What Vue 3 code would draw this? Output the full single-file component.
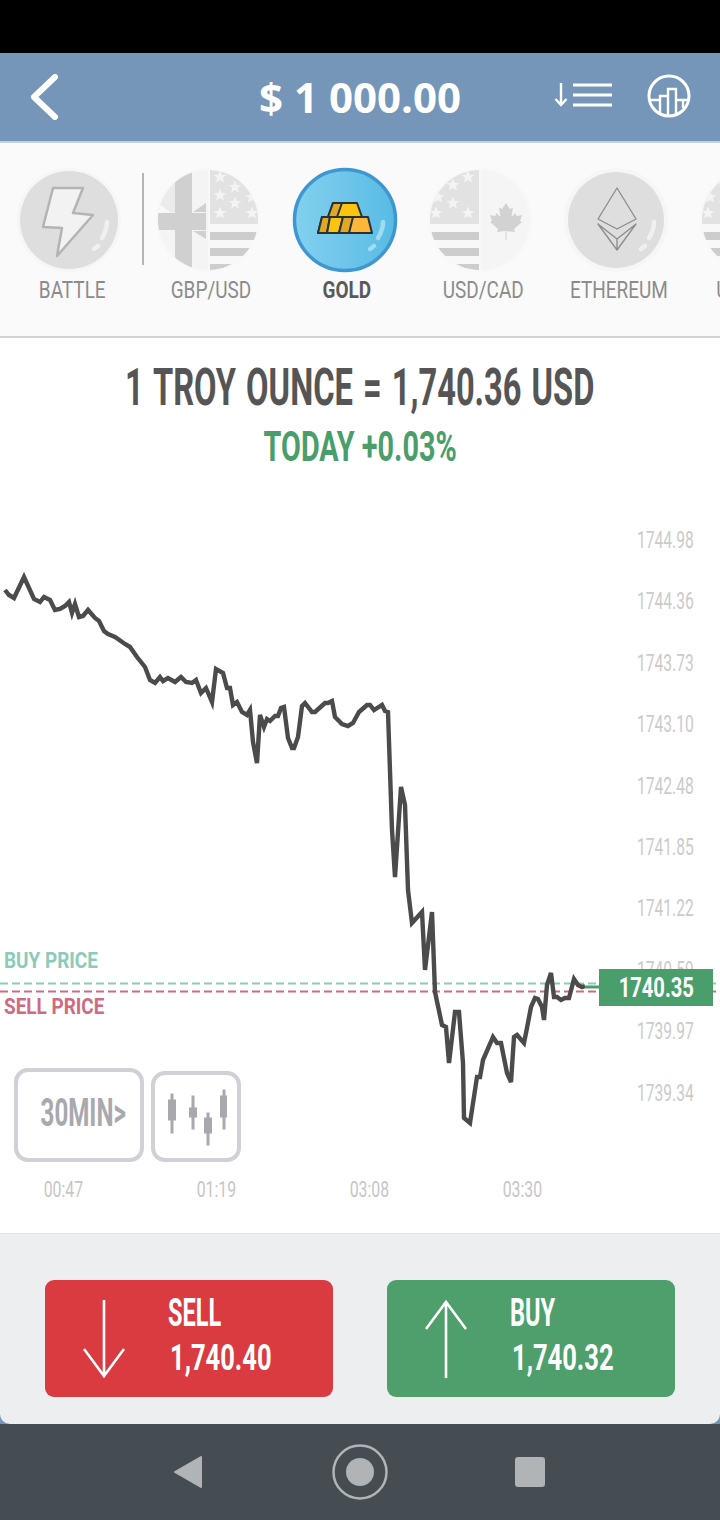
<template>
  <div class="screen">
    <div class="status"></div>

    <header class="head">
      <div class="head-left">
        <svg width="30" height="46" viewBox="0 0 30 46"><path d="M26 3 5 23l21 20" fill="none" stroke="#fff" stroke-width="6" stroke-linecap="round" stroke-linejoin="round"/></svg>
      </div>
      <div class="balance">$ 1 000.00</div>
      <div class="head-right">
        <svg class="sort" width="58" height="26" viewBox="0 0 58 26" fill="none" stroke="#fff">
          <path d="M7 1v22M1.5 17 7 23l5.500-6" stroke-width="2.400"/>
          <path d="M19 3h39M19 13h39M19 23h39" stroke-width="3"/>
        </svg>
        <svg class="stats" width="44" height="44" viewBox="0 0 44 44" fill="none" stroke="#fff" stroke-width="3">
          <circle cx="22" cy="22" r="20"/>
          <path d="M3 26h10v-4h8v-7h8v11h12M13 26v14M21 22v20M29 15v26M36 26v8" stroke-width="2.400"/>
        </svg>
      </div>
    </header>

    <nav class="tabs">
      <template v-for="t in tabs" :key="t.name">
        <div class="tab" :class="{ active: t.active }">
          <svg class="coin" width="112" height="112" viewBox="0 0 112 112">
            <defs>
              <clipPath :id="'clip-' + t.icon"><circle cx="56" cy="56" r="50"/></clipPath>
              <linearGradient v-if="t.active" id="gold-bg" x1="0" x2="1" y1="0" y2="0">
                <stop offset="0" stop-color="#83d0ef"/>
                <stop offset="1" stop-color="#58bbe4"/>
              </linearGradient>
            </defs>

            <template v-if="t.active">
              <circle cx="56" cy="56" r="50.500" fill="url(#gold-bg)" stroke="#3e97d1" stroke-width="3.500"/>
              <g stroke="#263238" stroke-width="2" stroke-linejoin="round">
                <path d="M44 39h24l5 14H39z" fill="#fdc40f"/>
                <path d="M44 39h9l-5 14h-9z" fill="#e2a823"/>
                <path d="M33 53h46l4 16H29z" fill="#fdb53a"/>
                <path d="M33 53h8l-3 16h-9z" fill="#e2a823"/>
                <path d="M41 53h13l-4 16H38z" fill="#fdc40f"/>
                <path d="M54 53h10l-4 16H50z" fill="#e2a823"/>
              </g>
            </template>

            <template v-else-if="t.icon === 'battle'">
              <circle cx="56" cy="56" r="52" fill="#f6f6f6"/>
              <circle cx="56" cy="56" r="49" fill="#dedede"/>
              <path d="M40 24h30L60 49l20 2-36 41 5-28-19-1z" fill="#f2f2f2" stroke="#b4b4b4" stroke-width="2.500" stroke-linejoin="round"/>
            </template>

            <template v-else-if="t.icon === 'eth'">
              <circle cx="56" cy="56" r="52" fill="#f6f6f6"/>
              <circle cx="56" cy="56" r="48" fill="#dedede"/>
              <path d="M57 24 38 55l19 10 19-10zM38 60l19 26 19-26-19 15zM57 75v11" fill="none" stroke="#8c8c8c" stroke-width="1.300" stroke-linejoin="round"/>
            </template>

            <template v-else>
              <circle cx="56" cy="56" r="52" fill="#f8f8f8"/>
              <g :clip-path="'url(#clip-' + t.icon + ')'">
                <template v-if="t.icon === 'gbp'">
                  <rect x="6" y="6" width="50" height="100" fill="#f4f4f4"/>
                  <rect x="6" y="6" width="17" height="42" fill="#ebebeb"/>
                  <path d="M6 39l12 9H6z" fill="#f8f8f8"/>
                  <rect x="23" y="6" width="17" height="100" fill="#d0d0d0"/>
                  <rect x="6" y="49" width="48" height="17" fill="#d0d0d0"/>
                  <path d="M54 39v9H41zM41 67h13v8z" fill="#d0d0d0"/>
                </template>

                <g v-if="t.icon !== 'gbp'" transform="translate(6 0)">
                  <rect width="49" height="60" fill="#e2e2e2"/>
                  <rect y="68" width="49" height="8" fill="#cdcdcd"/>
                  <rect y="84" width="49" height="8" fill="#cdcdcd"/>
                  <rect y="100" width="49" height="8" fill="#cdcdcd"/>
                  <polygon v-for="s in starsLeft" :key="s.join()" :points="star" :transform="`translate(${s[0]} ${s[1]})`" fill="#f4f4f4"/>
                </g>
                <g v-else transform="translate(58 0)">
                  <rect width="50" height="60" fill="#e2e2e2"/>
                  <rect y="68" width="50" height="8" fill="#cdcdcd"/>
                  <rect y="84" width="50" height="8" fill="#cdcdcd"/>
                  <rect y="100" width="50" height="8" fill="#cdcdcd"/>
                  <polygon v-for="s in starsRight" :key="s.join()" :points="star" :transform="`translate(${s[0]} ${s[1]})`" fill="#f4f4f4"/>
                </g>

                <template v-if="t.icon === 'cad'">
                  <rect x="57" y="0" width="50" height="112" fill="#f5f5f5"/>
                  <polygon points="82,39 86,45 89,43.500 87.500,53 91.500,49 92.500,52 98,51 96,57 98,58 90,65 91,68 82.500,67 82.500,76 81.500,76 81.500,67 73,68 74,65 66,58 68,57 66,51 71.500,52 72.500,49 76.500,53 75,43.500 78,45" fill="#d2d2d2"/>
                </template>
              </g>
            </template>

            <path v-if="t.active || t.icon === 'battle' || t.icon === 'eth'" d="M94 58c0 6-2 11-5 16M85 82l-4 3" fill="none" :stroke="t.active ? '#9fdcf2' : '#f0f0f0'" stroke-width="4.500" stroke-linecap="round"/>
          </svg>
          <span class="tab-label cond">{{ t.name }}</span>
        </div>
        <i v-if="t.icon === 'battle'" class="divider"></i>
      </template>
    </nav>

    <section class="quote">
      <div class="quote-main cond">1 TROY OUNCE = 1,740.36 USD</div>
      <div class="quote-sub cond">TODAY +0.03%</div>
    </section>

    <section class="chart">
      <svg class="plot" width="720" height="753" viewBox="0 480 720 753">
        <line x1="0" x2="720" y1="983.500" y2="983.500" stroke="#8ccbb9" stroke-width="2" stroke-dasharray="8 4"/>
        <line x1="0" x2="720" y1="991.500" y2="991.500" stroke="#cf6b80" stroke-width="2" stroke-dasharray="8 4"/>
        <polyline :points="line" fill="none" stroke="#4b4b4b" stroke-width="4.400" stroke-linejoin="miter"/>
        <path d="M585 987h14" stroke="#4a9e6b" stroke-width="3"/>
      </svg>

      <span v-for="(p, i) in axis" :key="p" class="axis cond" :style="{ top: 46 + i * 61.4 + 'px' }">{{ p }}</span>

      <span class="line-tag buy-tag cond">BUY PRICE</span>
      <span class="line-tag sell-tag cond">SELL PRICE</span>
      <div class="now"><span class="cond">1740.35</span></div>

      <div class="tools">
        <div class="tool period"><span class="cond">30MIN&gt;</span></div>
        <div class="tool candles">
          <svg width="62" height="60" viewBox="0 0 62 60" fill="#a8a8ae">
            <g v-for="c in candles" :key="c[0]">
              <rect :x="c[0] - 1.5" :y="c[1]" width="3" :height="c[2]"/>
              <rect :x="c[0] - 4" :y="c[3]" width="8" :height="c[4]"/>
            </g>
          </svg>
        </div>
      </div>

      <div class="times">
        <span v-for="t in times" :key="t" class="time"><span class="cond">{{ t }}</span></span>
      </div>
    </section>

    <section class="trade">
      <div class="actions">
        <div class="btn sell">
          <svg width="42" height="80" viewBox="0 0 42 80" fill="none" stroke="#fff" stroke-width="2.600">
            <path d="M21 1v76M1 50l20 27 20-27"/>
          </svg>
          <div class="btn-text">
            <span class="btn-name cond">SELL</span>
            <span class="btn-price cond">1,740.40</span>
          </div>
        </div>
        <div class="btn buy">
          <svg width="42" height="80" viewBox="0 0 42 80" fill="none" stroke="#fff" stroke-width="2.600">
            <path d="M21 79V3M1 30 21 3l20 27"/>
          </svg>
          <div class="btn-text">
            <span class="btn-name cond">BUY</span>
            <span class="btn-price cond">1,740.32</span>
          </div>
        </div>
      </div>
    </section>

    <footer class="sysnav">
      <svg width="30" height="34" viewBox="0 0 30 34"><path d="M29 2v30L3 17z" fill="#b0b4b6" stroke="#b0b4b6" stroke-width="2" stroke-linejoin="round"/></svg>
      <svg width="56" height="56" viewBox="0 0 56 56"><circle cx="28" cy="28" r="26.500" fill="none" stroke="#b0b4b6" stroke-width="2.500"/><circle cx="28" cy="28" r="14" fill="#b0b4b6"/></svg>
      <div class="stop"></div>
    </footer>
  </div>
</template>

<script setup>
const tabs = [
  { name: 'BATTLE', icon: 'battle' },
  { name: 'GBP/USD', icon: 'gbp' },
  { name: 'GOLD', icon: 'gold', active: true },
  { name: 'USD/CAD', icon: 'cad' },
  { name: 'ETHEREUM', icon: 'eth' },
  { name: 'USD/JPY', icon: 'usd2' }
]

const star = '0,-6.500 1.800,-2 6.500,-2 2.800,.8 4,5.500 0,2.900 -4,5.500 -2.800,.8 -6.500,-2 -1.800,-2'
const starsLeft = [[23, 21], [38, 13], [23, 39], [38, 49], [6, 49], [8, 33]]
const starsRight = [[10, 13], [25, 23], [10, 31], [25, 39], [10, 49], [42, 33], [42, 49]]

const axis = ['1744.98', '1744.36', '1743.73', '1743.10', '1742.48', '1741.85', '1741.22', '1740.59', '1739.97', '1739.34']
const times = ['00:47', '01:19', '03:08', '03:30']
// x, wick top, wick height, body top, body height
const candles = [
  [7, 6.5, 40, 12.5, 21],
  [28, 8.5, 34, 20.5, 10],
  [43, 25.5, 33, 30.5, 16],
  [59, 2.5, 40, 8.5, 22]
]

const line = [
  [5, 590], [9, 595], [14, 598], [24, 577], [34, 599], [40, 602], [44, 597], [50, 600], [55, 610], [60, 609], [65, 606],
  [69, 602], [72, 613], [75, 604], [79, 617], [83, 616], [88, 610], [95, 618], [99, 621], [104, 631], [108, 634], [115, 637],
  [125, 644], [130, 647], [137, 657], [145, 667], [150, 680], [155, 683], [160, 677], [163, 681], [168, 678], [175, 682],
  [181, 677], [186, 682], [192, 683], [196, 680], [201, 693], [206, 688], [212, 702], [216, 669], [223, 673], [227, 688],
  [230, 688], [233, 705], [237, 702], [242, 712], [247, 715], [250, 710], [253, 742], [257, 763], [260, 715], [264, 727],
  [267, 719], [270, 721], [275, 716], [278, 716], [281, 708], [284, 707], [288, 738], [292, 748], [294, 748], [298, 737],
  [302, 706], [305, 703], [312, 712], [315, 712], [325, 703], [328, 703], [332, 701], [335, 717], [342, 724], [348, 726],
  [353, 723], [359, 712], [367, 705], [370, 705], [374, 710], [382, 705], [385, 711], [388, 712], [392, 830], [395, 877],
  [401, 787], [405, 805], [408, 890], [412, 923], [422, 912], [425, 970], [432, 912], [435, 992], [442, 1025], [446, 1027],
  [449, 1063], [455, 1012], [459, 1012], [463, 1063], [464, 1118], [470, 1123], [477, 1077], [480, 1077], [483, 1060],
  [493, 1037], [497, 1043], [501, 1043], [507, 1073], [511, 1082], [514, 1037], [517, 1035], [524, 1043], [527, 1028],
  [531, 1007], [535, 998], [538, 999], [542, 1007], [544, 1020], [547, 985], [551, 973], [554, 997], [557, 997], [561, 1000],
  [565, 998], [569, 998], [574, 979], [578, 985], [582, 987], [585, 986]
].map(p => p.join(',')).join(' ')
</script>

<style>
body { background: #000; }
</style>

<style scoped>
* { box-sizing: border-box; }

.screen {
  width: 720px;
  height: 1520px;
  display: flex;
  flex-direction: column;
  overflow: hidden;
  background: #fff;
  font-family: Roboto, "Liberation Sans", sans-serif;
}

.cond {
  display: inline-block;
  white-space: nowrap;
  transform: scaleX(.76);
}

.status { height: 53px; background: #000; }

.head {
  height: 90px;
  display: grid;
  grid-template-columns: 1fr auto 1fr;
  align-items: center;
  padding: 0 29px;
  background: #7596b8;
  border-bottom: 2px solid #c3cfdb;
}
.head-left { display: flex; }
.head-right {
  display: flex;
  align-items: center;
  justify-content: flex-end;
  gap: 35px;
}
.balance {
  color: #fff;
  font: 700 42px "Open Sans", sans-serif;
  line-height: 50px;
}
.sort { margin-top: -4px; }
.stats { margin-top: -2px; }

.tabs {
  height: 195px;
  display: flex;
  padding-left: 4px;
  padding-top: 21px;
  background: #fafafa;
  border-bottom: 2px solid #d3d3d3;
}
.tab {
  flex: none;
  width: 136px;
  display: flex;
  flex-direction: column;
  align-items: center;
}
.coin { margin-left: -6px; }
.active .coin { margin-left: -4px; }
.tab-label {
  margin-top: -1px;
  font-size: 24px;
  line-height: 30px;
  color: #8c8c8c;
  transform: scaleX(.79);
}
.active .tab-label { color: #5a5a5a; font-weight: 700; }
.divider {
  flex: none;
  width: 2px;
  height: 92px;
  margin: 9px -1px 0 2px;
  background: #b5b5b5;
}

.quote {
  height: 142px;
  display: flex;
  flex-direction: column;
  align-items: center;
  background: #fff;
}
.quote-main {
  margin-top: 20px;
  font-size: 51px;
  font-weight: 700;
  line-height: 60px;
  word-spacing: 3px;
  color: #555;
  transform: scaleX(.64);
}
.quote-sub {
  margin-top: 2px;
  font-size: 43px;
  font-weight: 700;
  line-height: 52px;
  color: #4a9e6b;
  transform: scaleX(.67);
}

.chart {
  position: relative;
  flex: none;
  height: 753px;
  background: #fff;
}
.plot { position: absolute; left: 0; top: 0; }
.axis {
  position: absolute;
  left: 637px;
  font-size: 24px;
  line-height: 28px;
  color: #cbcbcb;
  transform: scaleX(.65);
  transform-origin: left center;
}
.line-tag {
  position: absolute;
  left: 4px;
  font-size: 22px;
  font-weight: 700;
  line-height: 26px;
  transform: scaleX(.86);
  transform-origin: left center;
}
.buy-tag { top: 468px; color: #8ccbb9; }
.sell-tag { top: 514px; color: #cf6b80; }
.now {
  position: absolute;
  left: 599px;
  top: 489px;
  width: 114px;
  height: 37px;
  display: flex;
  align-items: center;
  justify-content: center;
  background: #4a9e6b;
  color: #fff;
  font-size: 28px;
  font-weight: 700;
}
.now .cond { transform: scaleX(.72); }

.tools {
  position: absolute;
  left: 14px;
  top: 588px;
  display: flex;
  align-items: flex-end;
  gap: 7px;
}
.tool {
  display: flex;
  align-items: center;
  justify-content: center;
  border: 4px solid #d0d0d6;
  border-radius: 14px;
  background: #fff;
}
.period {
  width: 130px;
  height: 94px;
  padding-left: 8px;
  padding-bottom: 4px;
  color: #a8a8ae;
  font-size: 38px;
  font-weight: 700;
}
.period .cond { transform: scaleX(.635); }
.candles { width: 90px; height: 91px; }

.times {
  position: absolute;
  left: 0;
  top: 696px;
  display: flex;
  padding-left: 3px;
}
.time {
  width: 153px;
  padding-right: 33px;
  text-align: center;
  font-size: 22px;
  line-height: 28px;
  color: #c6c6c6;
}
.time .cond { transform: scaleX(.72); }

.trade {
  flex: none;
  height: 191px;
  background: #7596b8;
}
.actions {
  height: 100%;
  display: flex;
  justify-content: space-between;
  padding: 46px 45px 0;
  background: #eceef0;
  border-top: 1px solid #e2e2e2;
  border-radius: 0 0 10px 10px;
}
.btn {
  width: 288px;
  height: 117px;
  display: flex;
  align-items: center;
  padding-left: 38px;
  border-radius: 9px;
  color: #fff;
}
.sell { background: #d93b41; }
.buy { background: #4e9f6c; }
.btn-text {
  display: flex;
  flex-direction: column;
  align-items: flex-start;
  margin-left: 43px;
  margin-bottom: 6px;
}
.btn-name {
  font-size: 38px;
  font-weight: 700;
  line-height: 42px;
  transform: scaleX(.62);
  transform-origin: left center;
}
.btn-price {
  margin-top: 2px;
  margin-left: 2px;
  font-size: 37px;
  font-weight: 700;
  line-height: 44px;
  transform: scaleX(.69);
  transform-origin: left center;
}

.sysnav {
  flex: none;
  height: 96px;
  display: flex;
  align-items: center;
  justify-content: center;
  gap: 130px;
  padding-right: 3px;
  background: #454d53;
}
.stop {
  width: 30px;
  height: 30px;
  margin-left: -3px;
  border-radius: 3px;
  background: #b0b4b6;
}
</style>
